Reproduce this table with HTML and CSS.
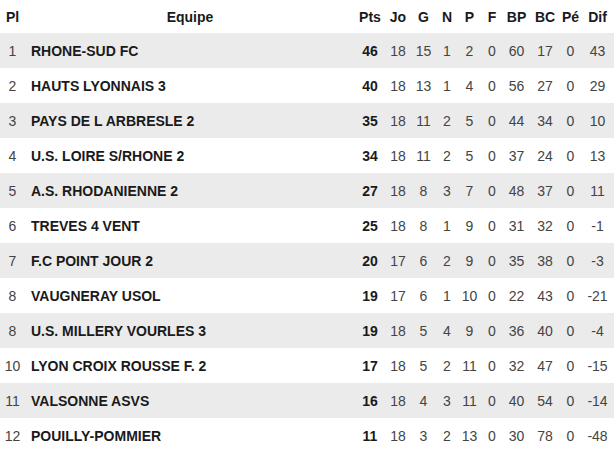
FILE: index.html
```html
<!DOCTYPE html>
<html lang="fr">
<head>
<meta charset="utf-8">
<title>Classement</title>
<link rel="stylesheet" href="styles.css">
</head>
<body>
<table class="standings">
  <colgroup>
    <col class="c-pl"><col class="c-team"><col class="c-pts"><col class="c-jo"><col class="c-g"><col class="c-n"><col class="c-p"><col class="c-f"><col class="c-bp"><col class="c-bc"><col class="c-pe"><col class="c-dif">
  </colgroup>
  <thead>
    <tr><th>Pl</th><th>Equipe</th><th>Pts</th><th>Jo</th><th>G</th><th>N</th><th>P</th><th>F</th><th>BP</th><th>BC</th><th>Pé</th><th>Dif</th></tr>
  </thead>
  <tbody>
    <tr><td>1</td><td class="team">RHONE-SUD FC</td><td class="pts">46</td><td>18</td><td>15</td><td>1</td><td>2</td><td>0</td><td>60</td><td>17</td><td>0</td><td>43</td></tr>
    <tr><td>2</td><td class="team">HAUTS LYONNAIS 3</td><td class="pts">40</td><td>18</td><td>13</td><td>1</td><td>4</td><td>0</td><td>56</td><td>27</td><td>0</td><td>29</td></tr>
    <tr><td>3</td><td class="team">PAYS DE L ARBRESLE 2</td><td class="pts">35</td><td>18</td><td>11</td><td>2</td><td>5</td><td>0</td><td>44</td><td>34</td><td>0</td><td>10</td></tr>
    <tr><td>4</td><td class="team">U.S. LOIRE S/RHONE 2</td><td class="pts">34</td><td>18</td><td>11</td><td>2</td><td>5</td><td>0</td><td>37</td><td>24</td><td>0</td><td>13</td></tr>
    <tr><td>5</td><td class="team">A.S. RHODANIENNE 2</td><td class="pts">27</td><td>18</td><td>8</td><td>3</td><td>7</td><td>0</td><td>48</td><td>37</td><td>0</td><td>11</td></tr>
    <tr><td>6</td><td class="team">TREVES 4 VENT</td><td class="pts">25</td><td>18</td><td>8</td><td>1</td><td>9</td><td>0</td><td>31</td><td>32</td><td>0</td><td>-1</td></tr>
    <tr><td>7</td><td class="team">F.C POINT JOUR 2</td><td class="pts">20</td><td>17</td><td>6</td><td>2</td><td>9</td><td>0</td><td>35</td><td>38</td><td>0</td><td>-3</td></tr>
    <tr><td>8</td><td class="team">VAUGNERAY USOL</td><td class="pts">19</td><td>17</td><td>6</td><td>1</td><td>10</td><td>0</td><td>22</td><td>43</td><td>0</td><td>-21</td></tr>
    <tr><td>8</td><td class="team">U.S. MILLERY VOURLES 3</td><td class="pts">19</td><td>18</td><td>5</td><td>4</td><td>9</td><td>0</td><td>36</td><td>40</td><td>0</td><td>-4</td></tr>
    <tr><td>10</td><td class="team">LYON CROIX ROUSSE F. 2</td><td class="pts">17</td><td>18</td><td>5</td><td>2</td><td>11</td><td>0</td><td>32</td><td>47</td><td>0</td><td>-15</td></tr>
    <tr><td>11</td><td class="team">VALSONNE ASVS</td><td class="pts">16</td><td>18</td><td>4</td><td>3</td><td>11</td><td>0</td><td>40</td><td>54</td><td>0</td><td>-14</td></tr>
    <tr><td>12</td><td class="team">POUILLY-POMMIER</td><td class="pts">11</td><td>18</td><td>3</td><td>2</td><td>13</td><td>0</td><td>30</td><td>78</td><td>0</td><td>-48</td></tr>
  </tbody>
</table>
</body>
</html>
```
FILE: styles.css
```css
html, body {
  margin: 0;
  padding: 0;
  background: #ffffff;
}
body {
  font-family: "Liberation Sans", Arial, sans-serif;
  font-size: 14px;
  color: #444;
}
.standings {
  width: 614px;
  table-layout: fixed;
  border-collapse: collapse;
  border-spacing: 0;
}
.c-pl { width: 25px; }
.c-team { width: 330px; }
.c-pts { width: 30px; }
.c-jo { width: 26px; }
.c-g { width: 25px; }
.c-n { width: 22px; }
.c-p { width: 23px; }
.c-f { width: 22px; }
.c-bp { width: 27px; }
.c-bc { width: 30px; }
.c-pe { width: 21px; }
.c-dif { width: 33px; }

.standings th,
.standings td {
  padding: 0;
  text-align: center;
  white-space: nowrap;
  overflow: hidden;
}
.standings thead tr { height: 33px; }
.standings th {
  font-weight: bold;
  color: #1a1a1a;
}
.standings tbody tr { height: 35px; }
.standings tbody tr:nth-child(odd) { background: #ebebeb; }
.standings td.team {
  text-align: left;
  padding-left: 6px;
  font-weight: bold;
  color: #1a1a1a;
}
.standings td.pts {
  font-weight: bold;
  color: #1a1a1a;
}
```
